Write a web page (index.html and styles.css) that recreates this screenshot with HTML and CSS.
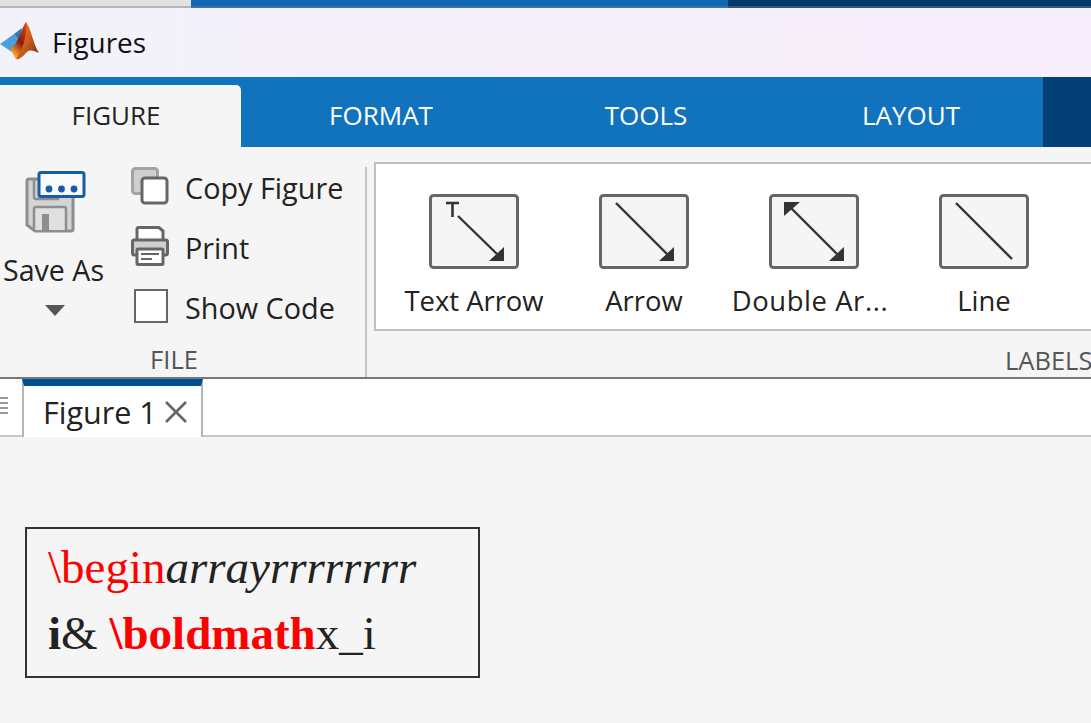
FILE: index.html
```html
<!DOCTYPE html>
<html lang="en">
<head>
    <meta charset="UTF-8">
    <title>Figures</title>
    <link rel="stylesheet" href="styles.css">
</head>
<body>
    <div class="topstrip">
        <div class="strip-grey"></div>
        <div class="strip-blue"></div>
        <div class="strip-navy"></div>
    </div>

    <header class="titlebar">
        <svg class="logo" width="42" height="44" viewBox="0 0 42 44">
            <defs>
                <linearGradient id="peak" x1="0" y1="0" x2="1" y2="0.7">
                    <stop offset="0" stop-color="#f0a02c"/>
                    <stop offset="0.55" stop-color="#dc641a"/>
                    <stop offset="1" stop-color="#8c3a1e"/>
                </linearGradient>
                <linearGradient id="fold" x1="0.7" y1="0" x2="0.3" y2="1">
                    <stop offset="0" stop-color="#d0451a"/>
                    <stop offset="0.5" stop-color="#7e1f12"/>
                    <stop offset="0.78" stop-color="#d8701c"/>
                    <stop offset="1" stop-color="#f6cc34"/>
                </linearGradient>
            </defs>
            <path d="M0 22 L14 12 L20 20 L12 30 Z" fill="#4d9fdc"/>
            <path d="M14 12 L22 6 L20 20 Z" fill="#2f78b8"/>
            <path d="M26 0 C31 6 33 22 39 31 C34 29 30 27 27 30 C24 33 20 38 16 37 C14 34 12 30 11 27 C17 23 21 8 26 0 Z" fill="url(#peak)"/>
            <path d="M26 0 C27 10 25 24 16 37 C14 34 12 30 11 27 C17 23 21 8 26 0 Z" fill="url(#fold)"/>
        </svg>
        <span class="apptitle">Figures</span>
    </header>

    <nav class="tabs">
        <div class="tab tab-active tab-figure">FIGURE</div>
        <div class="tab tab-format">FORMAT</div>
        <div class="tab tab-tools">TOOLS</div>
        <div class="tab tab-layout">LAYOUT</div>
        <div class="tabs-rest"></div>
    </nav>

    <section class="ribbon">
        <div class="group group-file">
            <div class="group-body">
                <div class="saveas">
                    <svg width="62" height="62" viewBox="0 0 62 62">
                        <path d="M2 10 Q2 8 4 8 H46 Q48 8 48 10 V58 Q48 60 46 60 H10 L2 54 Z" fill="#d4d4d4" stroke="#8e8e8e" stroke-width="3"/>
                        <path d="M9 9 V26 Q9 28 11 28 H33 V9" fill="none" stroke="#8e8e8e" stroke-width="2.5"/>
                        <path d="M9 59 V38 Q9 36 11 36 H39 Q41 36 41 38 V59" fill="#e0e0e0" stroke="#8e8e8e" stroke-width="2.5"/>
                        <rect x="17" y="43" width="7" height="16" fill="#8e8e8e"/>
                        <rect x="14" y="1.5" width="45" height="24" rx="2" fill="#f7f9fb" stroke="#1a5aa8" stroke-width="3"/>
                        <circle cx="24" cy="18" r="3.4" fill="#1a5aa8"/>
                        <circle cx="36.5" cy="18" r="3.4" fill="#1a5aa8"/>
                        <circle cx="49" cy="18" r="3.4" fill="#1a5aa8"/>
                    </svg>
                    <span class="saveas-label">Save As</span>
                    <span class="caret"></span>
                </div>
                <div class="rows">
                    <div class="row">
                        <svg width="38" height="38" viewBox="0 0 38 38">
                            <rect x="1.5" y="1.5" width="25" height="25" rx="3" fill="#cfcfcf" stroke="#a3a3a3" stroke-width="3"/>
                            <rect x="11" y="11" width="25" height="25" rx="3" fill="#fff" stroke="#666" stroke-width="3"/>
                        </svg>
                        <span>Copy Figure</span>
                    </div>
                    <div class="row">
                        <svg width="38" height="40" viewBox="0 0 38 40">
                            <path d="M6 14 V3 Q6 1.5 8 1.5 H28 L32 5 V14" fill="#fff" stroke="#666" stroke-width="3"/>
                            <path d="M1.5 27 V16 Q1.5 14 3 14 H35 Q36.5 14 36.5 16 V27 Q36.5 29 35 29 H3 Q1.5 29 1.5 27 Z" fill="#cfcfcf" stroke="#666" stroke-width="3"/>
                            <rect x="6" y="23" width="26" height="15.5" rx="1" fill="#fff" stroke="#666" stroke-width="3"/>
                            <path d="M10 28 H28 M10 33 H21" stroke="#666" stroke-width="2"/>
                        </svg>
                        <span>Print</span>
                    </div>
                    <div class="row">
                        <span class="checkbox"></span>
                        <span>Show Code</span>
                    </div>
                </div>
            </div>
            <div class="group-label">FILE</div>
        </div>
        <div class="group group-labels">
            <div class="gallery">
                <div class="gallery-item">
                    <svg width="90" height="75" viewBox="0 0 90 75">
                        <rect x="1.5" y="1.5" width="87" height="72" rx="3" fill="#f5f5f5" stroke="#666" stroke-width="3"/>
                        <path d="M17 9 H30 M23.5 9 V23" stroke="#333" stroke-width="2.6"/>
                        <path d="M29 22 L68 60" stroke="#333" stroke-width="2.4"/>
                        <path d="M75 53 V67 H60 Z" fill="#333"/>
                    </svg>
                    <span>Text Arrow</span>
                </div>
                <div class="gallery-item">
                    <svg width="90" height="75" viewBox="0 0 90 75">
                        <rect x="1.5" y="1.5" width="87" height="72" rx="3" fill="#f5f5f5" stroke="#666" stroke-width="3"/>
                        <path d="M17 9 L68 60" stroke="#333" stroke-width="2.4"/>
                        <path d="M75 53 V67 H60 Z" fill="#333"/>
                    </svg>
                    <span>Arrow</span>
                </div>
                <div class="gallery-item">
                    <svg width="90" height="75" viewBox="0 0 90 75">
                        <rect x="1.5" y="1.5" width="87" height="72" rx="3" fill="#f5f5f5" stroke="#666" stroke-width="3"/>
                        <path d="M22 14 L68 60" stroke="#333" stroke-width="2.4"/>
                        <path d="M75 53 V67 H60 Z" fill="#333"/>
                        <path d="M15 22 V8 H31 Z" fill="#333"/>
                    </svg>
                    <span class="label-wide">Double Ar...</span>
                </div>
                <div class="gallery-item">
                    <svg width="90" height="75" viewBox="0 0 90 75">
                        <rect x="1.5" y="1.5" width="87" height="72" rx="3" fill="#f5f5f5" stroke="#666" stroke-width="3"/>
                        <path d="M17 9 L73 65" stroke="#333" stroke-width="2.4"/>
                    </svg>
                    <span>Line</span>
                </div>
            </div>
            <div class="group-label group-label-right">LABELS</div>
        </div>
    </section>

    <div class="docbar">
        <div class="grip"><i></i><i></i><i></i><i></i></div>
        <div class="doctab">
            <span>Figure 1</span>
            <svg width="24" height="24" viewBox="0 0 24 24">
                <path d="M2 2 L22 22 M22 2 L2 22" stroke="#666" stroke-width="2.6"/>
            </svg>
        </div>
    </div>

    <main class="canvas">
        <div class="annotation">
            <div><span class="red">\begin</span><em>arrayrrrrrrrr</em></div>
            <div><strong>i</strong>&amp; <strong class="red">\boldmath</strong>x_i</div>
        </div>
    </main>
</body>
</html>
```

FILE: styles.css
```css
html, body {
    margin: 0;
    height: 723px;
    overflow: hidden;
}

body {
    font-family: "Open Sans", "Noto Sans", sans-serif;
    background-color: #f5f5f5;
    color: #222;
}

.topstrip {
    display: flex;
    height: 8px;
}

.strip-grey {
    width: 191px;
    background-color: #e2e2e2;
    border-bottom: 2px solid #b5b5b5;
    box-sizing: border-box;
}

.strip-blue {
    width: 537px;
    background-color: #1168b0;
    border-bottom: 2px solid #3a74a8;
    box-sizing: border-box;
}

.strip-navy {
    flex: 1;
    background-color: #023a6e;
    border-bottom: 2px solid #33587e;
    box-sizing: border-box;
}

.titlebar {
    display: flex;
    align-items: center;
    height: 69px;
    background: linear-gradient(90deg, #f3f2f9, #f7eefb);
}

.logo {
    margin-top: 3px;
}

.apptitle {
    margin-left: 10px;
    margin-top: -2px;
    font-size: 27.9px;
    color: #111;
}

.tabs {
    display: flex;
    height: 70px;
    background-color: #1172be;
}

.tab {
    box-sizing: border-box;
    height: 70px;
    line-height: 76px;
    font-size: 26px;
    color: #fff;
    text-align: center;
}

.tab-figure {
    width: 241px;
    padding-right: 9px;
}

.tab-format {
    width: 280px;
}

.tab-tools {
    width: 250px;
}

.tab-layout {
    width: 272px;
    padding-left: 8px;
}

.tab-active {
    margin-top: 8px;
    height: 62px;
    line-height: 60px;
    background-color: #f5f5f5;
    border-top-right-radius: 5px;
    color: #222;
}

.tabs-rest {
    flex: 1;
    background-color: #044075;
}

.ribbon {
    display: flex;
    height: 232px;
    box-sizing: border-box;
    border-bottom: 2px solid #777;
}

.group {
    display: flex;
    flex-direction: column;
}

.group-file {
    width: 365px;
    border-right: 2px solid #c4c4c4;
    margin-top: 20px;
    height: 210px;
}

.group-body {
    display: flex;
    height: 175px;
}

.group-label {
    font-size: 25.5px;
    color: #555;
    text-align: center;
    line-height: 35px;
    margin-top: 3px;
    padding-right: 17px;
}

.group-labels {
    flex: 1;
    min-width: 0;
    margin-left: 7px;
    margin-top: 15px;
}

.group-label-right {
    margin-top: 12px;
    padding: 0;
    text-align: left;
    margin-left: 631px;
    white-space: nowrap;
}

.saveas {
    width: 109px;
    display: flex;
    flex-direction: column;
    align-items: center;
}

.saveas svg {
    margin-left: 3px;
    margin-top: 4px;
}

.saveas-label {
    font-size: 28.6px;
    margin-top: 19px;
    padding-right: 2px;
    line-height: 36px;
    white-space: nowrap;
}

.caret {
    margin-top: 17px;
    width: 0;
    height: 0;
    border-left: 10px solid transparent;
    border-right: 10px solid transparent;
    border-top: 11px solid #555;
}

.rows {
    display: flex;
    flex-direction: column;
    margin-left: 22px;
    margin-top: -11px;
}

.row {
    display: flex;
    flex: none;
    align-items: center;
    height: 60px;
    font-size: 28.8px;
    white-space: nowrap;
}

.row svg {
    width: 38px;
    flex: none;
}

.row span:last-child {
    margin-left: 16px;
    padding-top: 3px;
}

.checkbox {
    display: block;
    box-sizing: border-box;
    width: 34px;
    height: 34px;
    margin-left: 3px;
    margin-right: 1px;
    background-color: #fff;
    border: 2px solid #666;
}

.gallery {
    display: flex;
    height: 169px;
    flex: none;
    box-sizing: border-box;
    background-color: #fff;
    border: 2px solid #c0c0c0;
    border-right: none;
    padding-left: 13px;
}

.gallery-item {
    flex: none;
    width: 170px;
    display: flex;
    flex-direction: column;
    align-items: center;
    padding-top: 30px;
    font-size: 27.4px;
    white-space: nowrap;
}

.gallery-item span {
    margin-top: 14px;
    line-height: 36px;
}

.gallery-item .label-wide {
    letter-spacing: 0.6px;
    margin-right: 8px;
}

.docbar {
    display: flex;
    height: 58px;
    box-sizing: border-box;
    background-color: #fff;
    border-bottom: 2px solid #c8c8c8;
}

.grip {
    width: 8px;
    margin-top: 18px;
    margin-right: 14px;
}

.grip i {
    display: block;
    height: 2px;
    margin-bottom: 3px;
    background-color: #999;
}

.doctab {
    display: flex;
    align-items: center;
    box-sizing: border-box;
    width: 181px;
    height: 58px;
    padding: 1px 0 0 19px;
    background-color: #fff;
    border-top: 7px solid #00508f;
    border-left: 2px solid #b5b5b5;
    border-right: 2px solid #b5b5b5;
    font-size: 30.5px;
    white-space: nowrap;
}

.doctab svg {
    margin-left: 7px;
}

.canvas {
    padding: 90px 0 0 25px;
}

.annotation {
    box-sizing: border-box;
    width: 455px;
    height: 151px;
    padding: 5px 0 0 21px;
    border: 2px solid #333;
    font-family: "Liberation Serif", serif;
    font-size: 47px;
    line-height: 66px;
    color: #222;
    white-space: nowrap;
}

.red {
    color: #ff0000;
}
```
